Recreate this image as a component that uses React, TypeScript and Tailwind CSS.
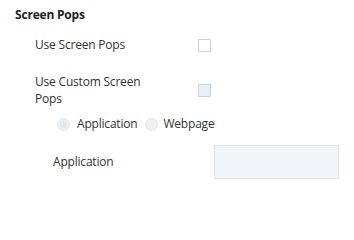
import React from "react";

export default function App() {
  return (
    <div
      className="w-[354px] h-[202px] bg-white text-[12px] tracking-[-0.2px] text-[#333333]"
      style={{ fontFamily: '"Open Sans", sans-serif' }}
    >
      <div className="px-[15px] pt-[6px] leading-[18px] text-[12px] font-bold text-[#222222]">Screen Pops</div>
      <div className="mt-[12px] pl-[35px] flex items-center">
        <div className="w-[163px] leading-[18px]">Use Screen Pops</div>
        <div className="w-[13px] h-[13px] border border-[#c9d3dd] bg-white"></div>
      </div>
      <div className="mt-[19px] pl-[35px] flex items-center">
        <div className="w-[120px] leading-[17px]">Use Custom Screen Pops</div>
        <div className="ml-[43px] w-[13px] h-[13px] border border-[#c9d3dd] bg-[#e9eff6]"></div>
      </div>
      <div className="mt-[8px] pl-[57px] flex items-center leading-[18px]">
        <div className="w-[13px] h-[13px] rounded-full border border-[#e3e7eb] bg-[#eef1f4] flex items-center justify-center">
          <div className="w-[7px] h-[7px] rounded-full bg-[#e3e6ea]"></div>
        </div>
        <span className="ml-[7px]">Application</span>
        <div className="ml-[8px] w-[13px] h-[13px] rounded-full border border-[#e3e7eb] bg-[#eef1f4]"></div>
        <span className="ml-[5px]">Webpage</span>
      </div>
      <div className="mt-[12px] pl-[53px] flex items-center">
        <div className="w-[161px] leading-[18px]">Application</div>
        <div className="w-[125px] h-[34px] border border-[#dfe5ea] bg-[#f1f5f8]"></div>
      </div>
    </div>
  );
}
